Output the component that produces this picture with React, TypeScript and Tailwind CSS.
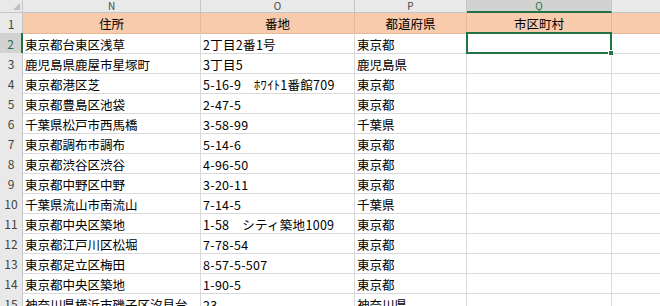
import React from 'react';

const cols = ['N', 'O', 'P', 'Q'];

const rows: [string, string, string][] = [
  ['東京都台東区浅草', '2丁目2番1号', '東京都'],
  ['鹿児島県鹿屋市星塚町', '3丁目5', '鹿児島県'],
  ['東京都港区芝', '5-16-9　ﾎﾜｲﾄ1番館709', '東京都'],
  ['東京都豊島区池袋', '2-47-5', '東京都'],
  ['千葉県松戸市西馬橋', '3-58-99', '千葉県'],
  ['東京都調布市調布', '5-14-6', '東京都'],
  ['東京都渋谷区渋谷', '4-96-50', '東京都'],
  ['東京都中野区中野', '3-20-11', '東京都'],
  ['千葉県流山市南流山', '7-14-5', '千葉県'],
  ['東京都中央区築地', '1-58　シティ築地1009', '東京都'],
  ['東京都江戸川区松堀', '7-78-54', '東京都'],
  ['東京都足立区梅田', '8-57-5-507', '東京都'],
  ['東京都中央区築地', '1-90-5', '東京都'],
  ['神奈川県横浜市磯子区汐見台', '23', '神奈川県'],
];

const grid = 'grid grid-cols-[23px_178px_154px_112px_145px_1fr]';
const cell = 'border-r border-b border-[#dadada] overflow-hidden whitespace-nowrap';

export default function App() {
  return (
    <div
      className="w-[660px] h-[306px] overflow-hidden bg-white text-black"
      style={{ fontFamily: '"Noto Sans CJK JP", "Noto Sans", sans-serif' }}
    >
      {/* column letters */}
      <div className={`${grid} h-[13px] bg-[#e9e9e9] text-[10px] leading-[10px] text-[#444]`}>
        <div className="relative border-r border-b border-[#c6c6c6]">
          <svg className="absolute right-[2px] bottom-[2px]" width="7" height="7" viewBox="0 0 7 7">
            <path d="M7 0 L7 7 L0 7 Z" fill="#bdbdbd" />
          </svg>
        </div>
        {cols.map((c) =>
          c === 'Q' ? (
            <div key={c} className="flex items-center justify-center border-r border-[#c6c6c6] border-b-2 border-b-[#217346] bg-[#d2d2d2] text-[#217346]">
              {c}
            </div>
          ) : (
            <div key={c} className="flex items-center justify-center border-r border-b border-[#c6c6c6]">
              {c}
            </div>
          )
        )}
        <div className="border-b border-[#c6c6c6]" />
      </div>

      {/* header row 1 */}
      <div className={`${grid} h-[20px] text-[12.5px] leading-[19px]`}>
        <div className="border-r border-b border-[#c6c6c6] bg-[#e9e9e9] pt-[1px] text-center text-[12px] text-[#444]">1</div>
        {['住所', '番地', '都道府県', '市区町村'].map((t) => (
          <div key={t} className="border-b border-r border-[#e8b896] bg-[#f8cbad] pt-[1px] text-center">
            {t}
          </div>
        ))}
        <div className="border-b border-[#e8b896] bg-[#f8cbad]" />
      </div>

      {rows.map((r, i) => {
        const n = i + 2;
        const sel = n === 2;
        return (
          <div key={n} className={`${grid} h-[20px] text-[12.5px] leading-[19px]`}>
            <div
              className={
                sel
                  ? 'border-b border-[#c6c6c6] border-r-2 border-r-[#217346] bg-[#d2d2d2] pt-[1px] text-center text-[12px] text-[#217346]'
                  : 'border-r border-b border-[#c6c6c6] bg-[#e9e9e9] pt-[1px] text-center text-[12px] text-[#444]'
              }
            >
              {n}
            </div>
            <div className={`${cell} pl-[2px] pt-[2px]`}>{r[0]}</div>
            <div className={`${cell} pl-[2px] pt-[2px] tracking-[0.3px]`}>{r[1]}</div>
            <div className={`${cell} pl-[2px] pt-[2px]`}>{r[2]}</div>
            <div className={`${cell} relative overflow-visible ${sel ? 'z-10' : ''}`}>
              {sel && (
                <div className="absolute -left-[1px] -top-[1px] right-[-1px] bottom-[-1px] border-2 border-[#217346]">
                  <div className="absolute -right-[4px] -bottom-[4px] h-[6px] w-[6px] border border-white bg-[#217346]" />
                </div>
              )}
            </div>
            <div className="border-b border-[#dadada]" />
          </div>
        );
      })}
    </div>
  );
}
